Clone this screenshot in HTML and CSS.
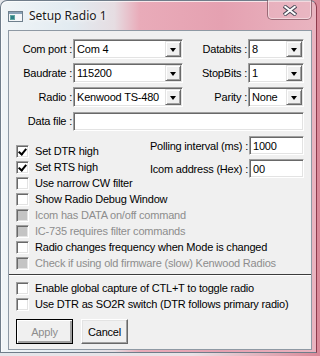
FILE: index.html
```html
<!DOCTYPE html>
<html lang="en">
<head>
    <meta charset="UTF-8">
    <link rel="stylesheet" href="styles.css">
    <title>Setup Radio 1</title>
</head>
<body>
    <div class="window">
        <div class="titlebar">
            <svg class="app-icon" width="15" height="11" viewBox="0 0 15 11">
                <rect x="0.5" y="0.5" width="14" height="10" fill="#f4f6f8" stroke="#6f7f8c"/>
                <rect x="1" y="1" width="13" height="2" fill="#8aa2b6"/>
                <rect x="2" y="4" width="5" height="5" fill="#5fa7a0"/>
                <rect x="3" y="5" width="3" height="3" fill="#2f7f86"/>
            </svg>
            <span class="title">Setup Radio 1</span>
            <div class="close-btn">
                <svg width="14" height="11" viewBox="0 0 14 11">
                    <path d="M1 1 L13 10 M13 1 L1 10" stroke="#4a4a58" stroke-width="4"/>
                    <path d="M1.5 1.2 L12.5 9.8 M12.5 1.2 L1.5 9.8" stroke="#ffffff" stroke-width="2"/>
                </svg>
            </div>
        </div>

        <div class="client">
            <div class="fields">
                <label>Com port :</label>
                <div class="combo"><span>Com 4</span><span class="drop"></span></div>
                <label>Databits :</label>
                <div class="combo"><span>8</span><span class="drop"></span></div>

                <label>Baudrate :</label>
                <div class="combo"><span>115200</span><span class="drop"></span></div>
                <label>StopBits :</label>
                <div class="combo"><span>1</span><span class="drop"></span></div>

                <label>Radio :</label>
                <div class="combo"><span>Kenwood TS-480</span><span class="drop"></span></div>
                <label>Parity :</label>
                <div class="combo"><span>None</span><span class="drop"></span></div>

                <label>Data file :</label>
                <div class="edit wide"></div>
            </div>

            <div class="options">
                <div class="checks">
                    <div class="check"><span class="box checked"></span>Set DTR high</div>
                    <div class="check"><span class="box checked"></span>Set RTS high</div>
                    <div class="check"><span class="box"></span>Use narrow CW filter</div>
                    <div class="check"><span class="box"></span>Show Radio Debug Window</div>
                    <div class="check disabled"><span class="box"></span>Icom has DATA on/off command</div>
                    <div class="check disabled"><span class="box"></span>IC-735 requires filter commands</div>
                    <div class="check"><span class="box"></span>Radio changes frequency when Mode is changed</div>
                    <div class="check disabled"><span class="box"></span>Check if using old firmware (slow) Kenwood Radios</div>
                </div>
                <div class="polling">
                    <label>Polling interval (ms) :</label>
                    <div class="edit small">1000</div>
                    <label>Icom address (Hex) :</label>
                    <div class="edit small">00</div>
                </div>
            </div>

            <div class="separator"></div>

            <div class="checks lower">
                <div class="check"><span class="box"></span>Enable global capture of CTL+T to toggle radio</div>
                <div class="check"><span class="box"></span>Use DTR as SO2R switch (DTR follows primary radio)</div>
            </div>

            <div class="buttons">
                <button class="default" disabled>Apply</button>
                <button class="cancel">Cancel</button>
            </div>
        </div>
    </div>
</body>
</html>
```

FILE: styles.css
```css
body {
    margin: 0;
    width: 320px;
    height: 356px;
    overflow: hidden;
    background: linear-gradient(90deg, #e4e6ea 0%, #e9e2e6 60%, #d98898 100%);
    font-family: "Liberation Sans", Arial, sans-serif;
    font-size: 11px;
    letter-spacing: -0.2px;
    color: #000;
}

.window {
    width: 317px;
    height: 353px;
    box-sizing: border-box;
    border: 1px solid #707d8a;
    border-right-color: #8c3a4c;
    border-radius: 7px 7px 0 0;
    background: linear-gradient(90deg, #f1f5f7 0%, #e2ebf1 22%, #e6dde2 36%, #e9abb9 44%, #e5a1b1 70%, #e9b4c0 100%);
    box-shadow: inset 1px 1px 0 rgba(255, 255, 255, 0.7);
    padding: 0 4px 2px 7px;
    display: flex;
    flex-direction: column;
}

.titlebar {
    height: 29px;
    display: flex;
    align-items: flex-start;
    flex-shrink: 0;
}

.app-icon {
    margin-top: 10px;
}

.title {
    margin-left: 6px;
    margin-top: 6px;
    font-family: "Noto Sans", "Open Sans", sans-serif;
    font-size: 12px;
    letter-spacing: 0;
    color: #1a1a1a;
    text-shadow: 0 0 6px #fff, 0 0 3px #fff;
}

.close-btn {
    margin-left: auto;
    margin-top: -1px;
    width: 45px;
    height: 20px;
    box-sizing: border-box;
    border: 1px solid rgba(90, 50, 60, 0.55);
    border-top: none;
    border-radius: 0 0 5px 5px;
    box-shadow: inset 0 0 0 1px rgba(255, 255, 255, 0.45);
    background: rgba(236, 190, 200, 0.35);
    display: flex;
    align-items: center;
    justify-content: center;
    padding-top: 1px;
}

.client {
    flex: 1;
    background: #f0f0f0;
    border: 1px solid #8e99a4;
    display: flex;
    flex-direction: column;
}

.fields {
    display: grid;
    grid-template-columns: 64px 110px 65px 56px;
    grid-auto-rows: 20px;
    row-gap: 4px;
    padding-top: 8px;
}

.fields label,
.polling label {
    align-self: center;
    text-align: right;
    white-space: nowrap;
    padding-right: 1px;
}

.combo,
.edit {
    box-sizing: border-box;
    background: #fff;
    border: 1px solid;
    border-color: #a0a0a0 #ffffff #ffffff #a0a0a0;
    box-shadow: inset 1px 1px 0 #696969, inset -1px -1px 0 #e3e3e3;
    display: flex;
    align-items: center;
    padding: 0 2px 0 3px;
    white-space: nowrap;
}

.combo span:first-child {
    flex: 1;
}

.drop {
    width: 16px;
    height: 16px;
    box-sizing: border-box;
    background: #f0f0f0;
    border: 1px solid;
    border-color: #e3e3e3 #696969 #696969 #e3e3e3;
    box-shadow: inset 1px 1px 0 #fff, inset -1px -1px 0 #a0a0a0;
    margin-right: -1px;
    display: flex;
    align-items: center;
    justify-content: center;
}

.drop::after {
    content: "";
    border-left: 3.5px solid transparent;
    border-right: 3.5px solid transparent;
    border-top: 4px solid #000;
    margin-top: 1px;
}

.edit.wide {
    grid-column: 2 / 5;
    height: 19px;
    margin-top: 1px;
}

.options {
    display: grid;
    grid-template-columns: 1fr auto;
}

.options .checks {
    grid-area: 1 / 1 / 2 / 3;
    padding-top: 12px;
}

.polling {
    grid-area: 1 / 2 / 2 / 3;
    align-self: start;
    display: grid;
    grid-template-columns: auto 55px;
    row-gap: 4px;
    margin-top: 5px;
    margin-right: 7px;
}

.edit.small {
    height: 19px;
}

.check {
    height: 16px;
    display: flex;
    align-items: center;
    padding-left: 7px;
    white-space: nowrap;
}

.box {
    width: 13px;
    height: 13px;
    box-sizing: border-box;
    background: #fff;
    border: 1px solid;
    border-color: #a0a0a0 #ffffff #ffffff #a0a0a0;
    box-shadow: inset 1px 1px 0 #696969, inset -1px -1px 0 #e3e3e3;
    margin-right: 6px;
    flex-shrink: 0;
    position: relative;
}

.box.checked::after {
    content: "";
    position: absolute;
    left: 3px;
    top: 1px;
    width: 3px;
    height: 6px;
    border: solid #000;
    border-width: 0 2px 2px 0;
    transform: rotate(40deg);
}

.check.disabled {
    color: #8d8d8d;
}

.check.disabled .box {
    background: #c4c4c4;
}

.separator {
    margin-top: 3px;
    border-top: 1px solid #3c3c3c;
    border-bottom: 1px solid #fff;
}

.lower {
    padding-top: 4px;
}

.buttons {
    display: flex;
    gap: 8px;
    padding: 7px 0 0 7px;
}

button {
    height: 25px;
    box-sizing: border-box;
    font-family: "Liberation Sans", Arial, sans-serif;
    font-size: 11px;
    letter-spacing: -0.2px;
    background: #f0f0f0;
    color: #000;
    border: 1px solid;
    border-color: #ffffff #696969 #696969 #ffffff;
    box-shadow: inset -1px -1px 0 #a0a0a0, inset 1px 1px 0 #e3e3e3;
    padding: 0;
}

button.default {
    width: 57px;
    border: 1px solid #000;
    box-shadow: inset 1px 1px 0 #fff, inset -2px -2px 0 #a0a0a0;
    color: #8d8d8d;
}

button.cancel {
    width: 47px;
}
```
